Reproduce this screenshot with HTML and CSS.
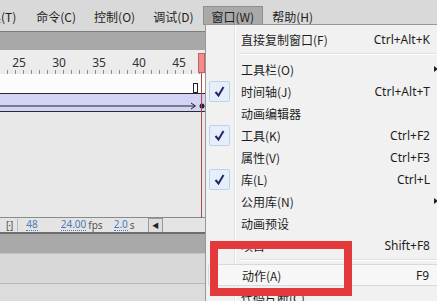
FILE: index.html
```html
<!DOCTYPE html>
<html lang="zh-CN">
<head>
    <meta charset="UTF-8">
    <title>Flash - 窗口菜单</title>
    <link rel="stylesheet" href="styles.css">
</head>
<body>
    <div class="menubar">
        <span class="mb-item first">具(T)</span>
        <span class="mb-item">命令(C)</span>
        <span class="mb-item">控制(O)</span>
        <span class="mb-item">调试(D)</span>
        <span class="mb-item active">窗口(W)</span>
        <span class="mb-item">帮助(H)</span>
    </div>

    <div class="panel-head"></div>

    <div class="ruler">
        <span>25</span><span>30</span><span>35</span><span>40</span><span>45</span>
    </div>

    <div class="layer-row frames">
        <span class="blank-key"></span>
    </div>
    <div class="layer-row tween">
        <svg width="205" height="17" viewBox="0 0 205 17">
            <line x1="0" y1="12" x2="195" y2="12" stroke="#222" stroke-width="1"/>
            <path d="M191 9 L195.5 12 L191 15" fill="none" stroke="#222" stroke-width="1"/>
            <circle cx="202" cy="12" r="2.5" fill="#222"/>
        </svg>
    </div>
    <div class="timeline-empty"></div>

    <div class="status">
        <span class="center-icon">[·]</span>
        <span class="status-sep"></span>
        <span class="num">48</span>
        <span class="num fps">24.00</span><span class="unit">fps</span>
        <span class="num sec">2.0</span><span class="unit">s</span>
        <span class="scroll-btn">◀</span>
    </div>
    <div class="dark-line"></div>
    <div class="band"></div>
    <div class="band-light"></div>
    <div class="band-rest"></div>

    <!-- 播放头 -->
    <div class="playhead"></div>

    <!-- 窗口下拉菜单 -->
    <div class="menu">
        <div class="mi"><span></span><span>直接复制窗口(F)</span><span class="sc">Ctrl+Alt+K</span><span></span></div>
        <div class="sep"></div>
        <div class="mi"><span></span><span>工具栏(O)</span><span class="sc"></span><span class="arrow"></span></div>
        <div class="mi"><span class="ck"><svg width="19" height="19" viewBox="0 0 19 19"><path d="M5.5 10 L8.5 13.5 L13.5 5" fill="none" stroke="#1c2a6c" stroke-width="2"/></svg></span><span>时间轴(J)</span><span class="sc">Ctrl+Alt+T</span><span></span></div>
        <div class="mi"><span></span><span>动画编辑器</span><span class="sc"></span><span></span></div>
        <div class="mi"><span class="ck"><svg width="19" height="19" viewBox="0 0 19 19"><path d="M5.5 10 L8.5 13.5 L13.5 5" fill="none" stroke="#1c2a6c" stroke-width="2"/></svg></span><span>工具(K)</span><span class="sc">Ctrl+F2</span><span></span></div>
        <div class="mi"><span></span><span>属性(V)</span><span class="sc">Ctrl+F3</span><span></span></div>
        <div class="mi"><span class="ck"><svg width="19" height="19" viewBox="0 0 19 19"><path d="M5.5 10 L8.5 13.5 L13.5 5" fill="none" stroke="#1c2a6c" stroke-width="2"/></svg></span><span>库(L)</span><span class="sc">Ctrl+L</span><span></span></div>
        <div class="mi"><span></span><span>公用库(N)</span><span class="sc"></span><span class="arrow"></span></div>
        <div class="mi"><span></span><span>动画预设</span><span class="sc"></span><span></span></div>
        <div class="mi"><span></span><span>项目</span><span class="sc">Shift+F8</span><span></span></div>
        <div class="sep"></div>
        <div class="mi hover"><span></span><span>动作(A)</span><span class="sc">F9</span><span></span></div>
        <div class="mi"><span></span><span>代码片断(C)</span><span class="sc"></span><span></span></div>
    </div>

    <!-- 红色标注框 -->
    <div class="mark"></div>
</body>
</html>
```

FILE: styles.css
```css
body {
    margin: 0;
    width: 437px;
    height: 301px;
    overflow: hidden;
    position: relative;
    background: #dcdcdc;
    font-family: "Noto Sans CJK SC", "Noto Sans", sans-serif;
    font-size: 12px;
    color: #1e1e1e;
}

.menubar {
    height: 31px;
    display: flex;
    align-items: center;
    background: #d9d9d9;
    border-bottom: 1px solid #7c7c7c;
}

.mb-item {
    height: 19px;
    line-height: 19px;
    padding: 0 8px;
    box-sizing: border-box;
    border: 1px solid transparent;
    white-space: nowrap;
}

.mb-item.first {
    margin-left: -20px;
    margin-right: 2px;
}

.mb-item.active {
    background: #a9a9a9;
    border-color: #8e8e8e;
}

.panel-head {
    height: 18px;
    background: #a8a8a8;
}

.ruler {
    height: 24px;
    display: flex;
    background-color: #ececec;
    background-image: repeating-linear-gradient(to right, transparent 0 7px, #8c8c8c 7px 8px);
    background-size: 100% 4px;
    background-repeat: no-repeat;
    background-position: 0 bottom;
    width: 205px;
}

.ruler span {
    width: 40px;
    flex: none;
    text-align: center;
    font-family: "Noto Sans", sans-serif;
    font-size: 12px;
    line-height: 26px;
    color: #333;
}

.ruler span:first-child {
    margin-left: -1px;
}

.layer-row {
    width: 205px;
    position: relative;
    border-bottom: 1px solid #2a2a2a;
}

.frames {
    height: 19px;
    background: #fcfcfc;
}

.blank-key {
    position: absolute;
    left: 193px;
    top: 9px;
    width: 3px;
    height: 8px;
    border: 1px solid #222;
    background: #fff;
}

.tween {
    height: 17px;
    background: #d3d3f6;
}

.tween svg {
    display: block;
}

.timeline-empty {
    width: 205px;
    height: 105px;
    background: #e8e8e8;
    border-bottom: 1px solid #8a8a8a;
}

.status {
    width: 205px;
    height: 14px;
    display: flex;
    align-items: center;
    background: #e4e4e4;
    font-family: "Noto Sans", sans-serif;
    font-size: 10px;
}

.center-icon {
    margin-left: 6px;
    color: #555;
    letter-spacing: -1px;
}

.status-sep {
    width: 1px;
    height: 12px;
    background: #b8b8b8;
    margin: 0 8px 0 5px;
}

.num {
    color: #4a7bb6;
    border-bottom: 1px dotted #4a7bb6;
    line-height: 11px;
}

.fps {
    margin-left: 23px;
}

.sec {
    margin-left: 11px;
}

.unit {
    color: #555;
    margin-left: 2px;
}

.scroll-btn {
    margin-left: 13px;
    width: 15px;
    height: 14px;
    box-sizing: border-box;
    border: 1px solid #9a9a9a;
    border-bottom: none;
    background: #dedede;
    font-size: 7px;
    line-height: 13px;
    text-align: center;
    color: #222;
}

.dark-line {
    height: 2px;
    background: #6e6e6e;
}

.band {
    height: 19px;
    background: #a9a9a9;
    border-bottom: 1px solid #c4c4c4;
}

.band-light {
    height: 29px;
    background: #d8d8d8;
    border-bottom: 1px solid #b9b9b9;
}

.band-rest {
    height: 20px;
    background: #dcdcdc;
}

.playhead {
    position: absolute;
    left: 198px;
    top: 53px;
    width: 7px;
    height: 20px;
    box-sizing: border-box;
    background: #f08c8c;
    border: 1px solid #c46060;
}

.playhead::after {
    content: "";
    position: absolute;
    left: 2px;
    top: 19px;
    width: 1px;
    height: 145px;
    background: #a84848;
}

.menu {
    position: absolute;
    left: 205px;
    top: 24px;
    width: 250px;
    height: 290px;
    box-sizing: border-box;
    padding: 3px 2px;
    background-color: #f1f1f1;
    background-image: linear-gradient(to right, transparent 28px, #e2e3e3 28px 29px, #fff 29px 30px, transparent 30px);
    border-left: 1px solid #979797;
    border-top: 1px solid #979797;
}

.mi {
    height: 22px;
    display: grid;
    grid-template-columns: 33px 1fr auto 23px;
    align-items: center;
    box-sizing: border-box;
    white-space: nowrap;
}

.mi.hover {
    border: 1px solid #d9d9d9;
    border-radius: 2px;
    background: #f7f7f7;
}

.ck {
    width: 21px;
    height: 21px;
    box-sizing: border-box;
    margin-left: 1px;
    border: 1px solid #bcd3ee;
    border-radius: 2px;
    background: #e6eef9;
}

.ck svg {
    display: block;
}

.sc {
    font-family: "Noto Sans", sans-serif;
    font-size: 12px;
}

.arrow {
    width: 0;
    height: 0;
    margin-left: 4px;
    border-top: 3px solid transparent;
    border-bottom: 3px solid transparent;
    border-left: 4px solid #222;
}

.sep {
    height: 8px;
    margin-left: 32px;
    background: linear-gradient(#e0e0e0, #e0e0e0) 0 3px / 100% 1px no-repeat,
                linear-gradient(#fff, #fff) 0 4px / 100% 1px no-repeat;
}

.mark {
    position: absolute;
    left: 210px;
    top: 241px;
    width: 142px;
    height: 55px;
    box-sizing: border-box;
    border: 8px solid #e3393b;
}
```
